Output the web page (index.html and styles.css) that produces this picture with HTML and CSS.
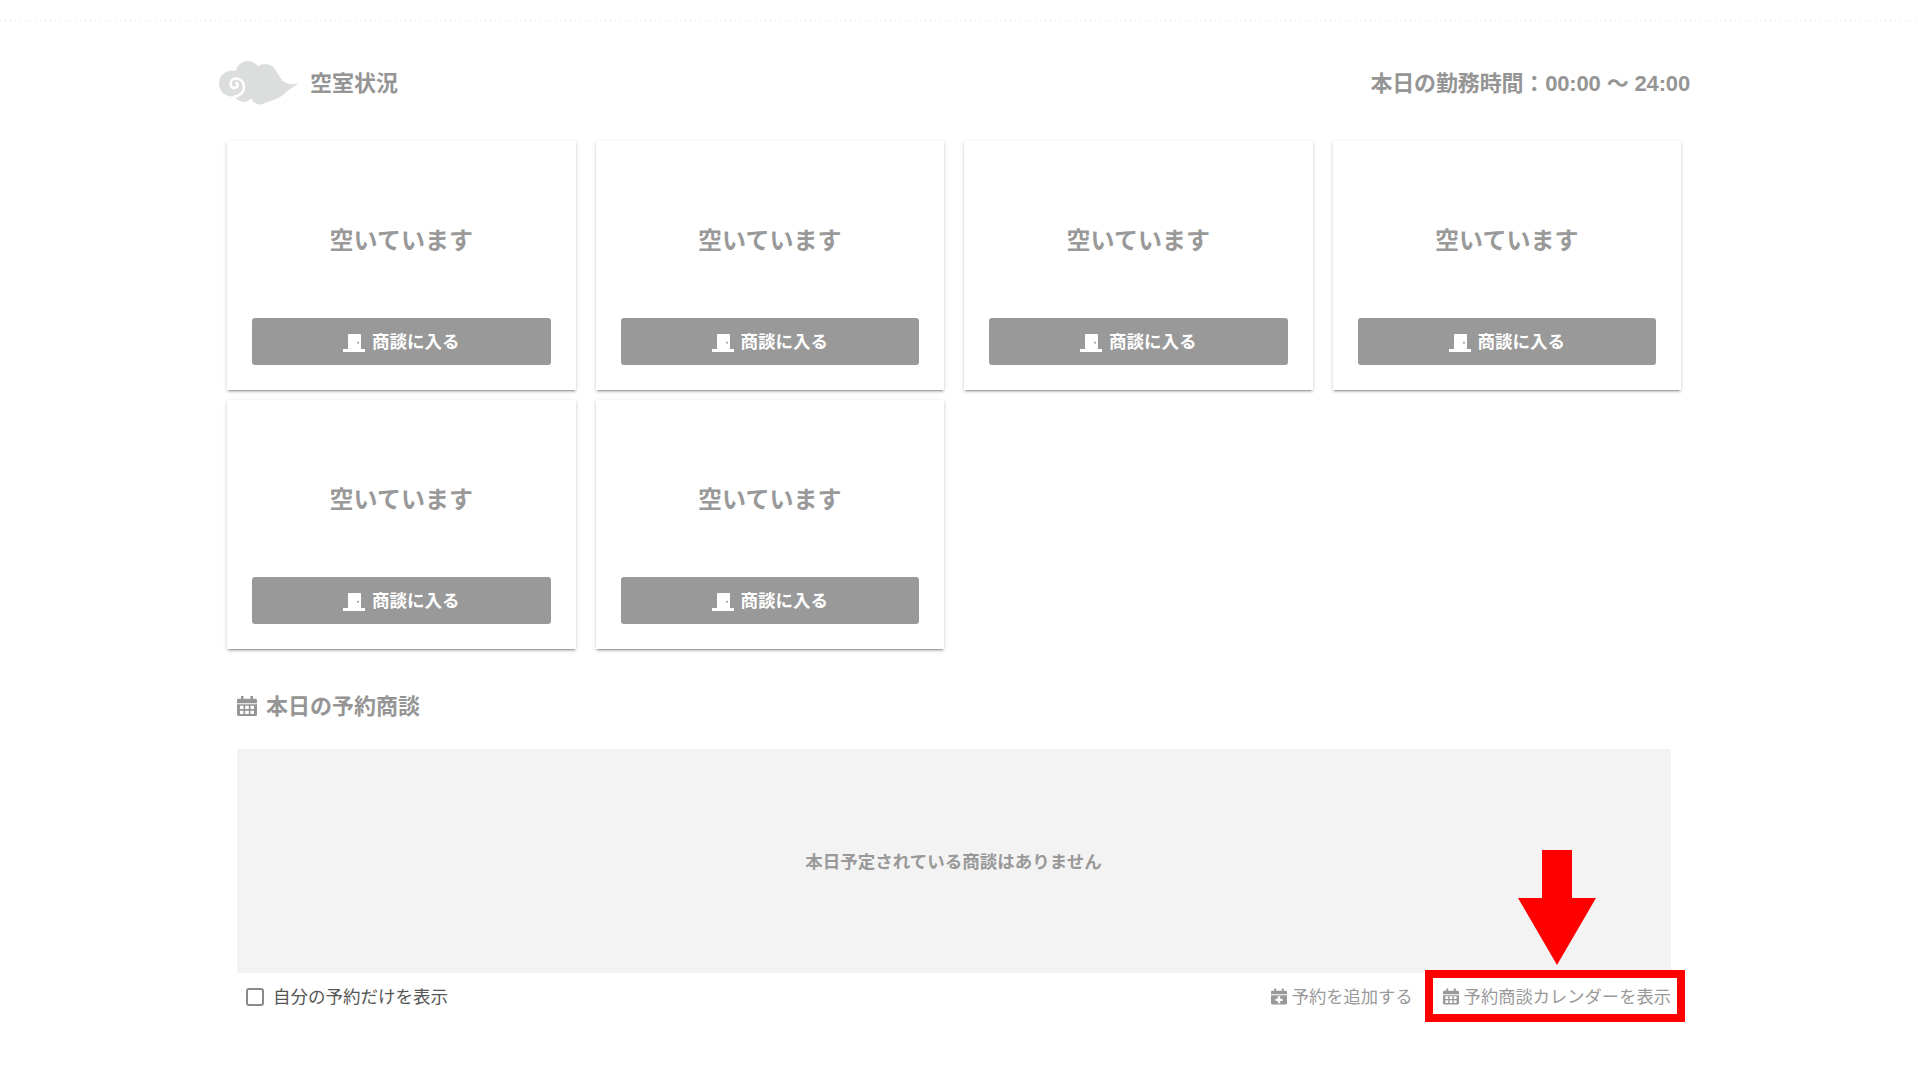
FILE: index.html
```html
<!DOCTYPE html>
<html lang="ja">
<head>
<meta charset="utf-8">
<title>空室状況</title>
<link rel="stylesheet" href="styles.css">
</head>
<body>
<svg class="defs" width="0" height="0" aria-hidden="true">
  <symbol id="cal" viewBox="0 0 20 20">
    <path fill-rule="evenodd" d="M4 0h2.500v2.800h7V0H16v2.800h2.500c.8 0 1.500.7 1.500 1.500v3H0v-3c0-.8.7-1.500 1.500-1.500H4zM0 8.300h20v10.200c0 .8-.7 1.500-1.500 1.500h-17C.7 20 0 19.300 0 18.500zM3 9.700V13h3.500V9.700zM8.200 9.700V13h3.600V9.700zM13.500 9.700V13H17V9.700zM3 14.700V18h3.500v-3.300zM8.200 14.700V18h3.600v-3.300zM13.500 14.700V18H17v-3.300z"/>
  </symbol>
  <symbol id="door" viewBox="0 0 22 18">
    <path fill-rule="evenodd" d="M6 0h11c.6 0 1 .4 1 1v14H5V1c0-.6.4-1 1-1zM14 8.800a1 1 0 1 0 2 0 1 1 0 0 0-2 0z"/>
    <rect x="0" y="15" width="22" height="3"/>
  </symbol>
</svg>

<div class="topline"></div>

<header class="status-head">
  <div class="status-title">
    <svg class="cloud" viewBox="0 0 80 44" aria-hidden="true">
      <g fill="#dcdedd">
        <circle cx="13" cy="22.500" r="13"/>
        <circle cx="29" cy="12.500" r="12.500"/>
        <circle cx="46" cy="15.500" r="12.500"/>
        <circle cx="24.500" cy="31" r="10"/>
        <circle cx="41" cy="33.500" r="10"/>
        <circle cx="28" cy="23" r="13"/>
        <path d="M52 6c6 3 8 10 12 14 4 3 9 3.500 15.500 2.800-4.500 2-8 5-11.800 8-3.500 3-7 6-10 7-5 2-10 4-15 4.200z"/>
      </g>
      <path d="M16 35.500c5-1 9-4.500 9-9.500 0-5-3.500-8.500-7.500-8.500-3.500 0-6 2.500-6 5.500 0 2.500 2 4.500 4.500 3.800 2.500-.5 3.500-3.300 1.500-5" fill="none" stroke="#fff" stroke-width="2.500" stroke-linecap="round"/>
    </svg>
    <h1>空室状況</h1>
  </div>
  <p class="hours">本日の勤務時間：00:00 〜 24:00</p>
</header>

<section class="rooms">
  <article class="room"><p>空いています</p><button class="enter"><svg class="door"><use href="#door"/></svg><span>商談に入る</span></button></article>
  <article class="room"><p>空いています</p><button class="enter"><svg class="door"><use href="#door"/></svg><span>商談に入る</span></button></article>
  <article class="room"><p>空いています</p><button class="enter"><svg class="door"><use href="#door"/></svg><span>商談に入る</span></button></article>
  <article class="room"><p>空いています</p><button class="enter"><svg class="door"><use href="#door"/></svg><span>商談に入る</span></button></article>
  <article class="room"><p>空いています</p><button class="enter"><svg class="door"><use href="#door"/></svg><span>商談に入る</span></button></article>
  <article class="room"><p>空いています</p><button class="enter"><svg class="door"><use href="#door"/></svg><span>商談に入る</span></button></article>
</section>

<section class="today">
  <h2><svg class="cal-lg"><use href="#cal"/></svg><span>本日の予約商談</span></h2>
  <div class="empty">本日予定されている商談はありません</div>
  <div class="today-foot">
    <label class="own"><span class="box"></span><span>自分の予約だけを表示</span></label>
    <div class="links">
      <a class="link">
        <svg class="cal-sm" viewBox="0 0 20 20" aria-hidden="true"><path fill-rule="evenodd" d="M4 0h2.500v2.800h7V0H16v2.800h2.500c.8 0 1.500.7 1.500 1.500v3H0v-3c0-.8.7-1.500 1.500-1.500H4zM0 8.300h20v10.200c0 .8-.7 1.500-1.500 1.500h-17C.7 20 0 19.300 0 18.500zM8.500 9.800v2.900H5.600v2.800h2.900v2.900h3v-2.900h2.900v-2.800h-2.900V9.800z"/></svg><span>予約を追加する</span>
      </a>
      <a class="link"><svg class="cal-sm"><use href="#cal"/></svg><span>予約商談カレンダーを表示</span></a>
    </div>
  </div>
  <div class="callout-box"></div>
  <svg class="callout-arrow" viewBox="0 0 78 115" aria-hidden="true"><path d="M24 0h30v48h24L39 115 0 48h24z" fill="#f00"/></svg>
</section>
</body>
</html>
```

FILE: styles.css
```css
* { box-sizing: border-box; }
html, body { margin: 0; padding: 0; }
body {
  width: 1920px;
  height: 1080px;
  overflow: hidden;
  background: #fff;
  color: #999;
  font-family: "Liberation Sans", "Noto Sans CJK JP", sans-serif;
}
.defs { position: absolute; }
.topline {
  height: 21px;
  background: repeating-linear-gradient(90deg, #e0e0e0 0 1px, transparent 1px 5px) left bottom / 100% 1px no-repeat;
}

.status-head {
  display: flex;
  justify-content: space-between;
  align-items: center;
  height: 44px;
  margin: 40px 230px 0 219px;
}
.status-title { display: flex; align-items: center; gap: 11px; }
.cloud { width: 80px; height: 44px; display: block; flex: none; }
.status-title h1 { margin: 0 0 5px; font-size: 22px; font-weight: 700; color: #959595; }
.hours { margin: 0 0 5px; font-size: 22px; font-weight: 700; color: #959595; letter-spacing: -0.15px; }

.rooms {
  display: grid;
  grid-template-columns: repeat(4, 348.500px);
  column-gap: 20px;
  row-gap: 10px;
  margin: 36px 0 0 227px;
}
.room {
  height: 249px;
  padding: 0 25px 25.500px;
  display: flex;
  flex-direction: column;
  background: #fff;
  box-shadow: 0 2px 2px rgba(0,0,0,.14), 0 3px 1px -2px rgba(0,0,0,.2), 0 1px 5px rgba(0,0,0,.12);
}
.room p {
  flex: 1;
  margin: 0;
  padding-top: 18px;
  display: flex;
  align-items: center;
  justify-content: center;
  font-size: 24px;
  font-weight: 700;
  color: #999;
}
.enter {
  height: 46.500px;
  display: flex;
  align-items: center;
  justify-content: center;
  gap: 7px;
  border: 0;
  border-radius: 3px;
  background: #999;
  color: #fff;
  font: 700 17.500px "Liberation Sans", "Noto Sans CJK JP", sans-serif;
}
.enter span { margin-bottom: 2px; }
.door { width: 22px; height: 18px; fill: #fff; margin-top: 3px; }

.today { margin: 43px 249px 0 237px; }
.today h2 {
  margin: 0;
  height: 30px;
  display: flex;
  align-items: center;
  gap: 9px;
  font-size: 22px;
  font-weight: 700;
  color: #959595;
}
.today h2 span { margin-bottom: 7px; }
.cal-lg { width: 20px; height: 20px; fill: #959595; flex: none; margin-bottom: 2px; }
.empty {
  height: 224px;
  margin-top: 27px;
  display: flex;
  align-items: center;
  justify-content: center;
  padding: 0 1px 2px 0;
  background: #f3f3f3;
  font-size: 17.500px;
  font-weight: 700;
  color: #999;
}
.today-foot {
  height: 48px;
  padding-left: 9px;
  display: flex;
  align-items: center;
  justify-content: space-between;
}
.own { display: flex; align-items: center; gap: 9px; font-size: 17.500px; font-weight: 400; color: #555; }
.own span:last-child { margin-bottom: 4px; }
.box {
  width: 18px;
  height: 18px;
  border: 2px solid #8a8a8a;
  border-radius: 3px;
}
.links { display: flex; gap: 30px; }
.link { display: flex; align-items: center; gap: 5px; font-size: 17.300px; color: #999; }
.link span { margin-bottom: 4px; }
.cal-sm { width: 16px; height: 17px; fill: #999; flex: none; margin-bottom: 2px; }

.callout-box {
  position: absolute;
  left: 1425px;
  top: 970px;
  width: 260px;
  height: 52px;
  border: 8px solid #f00;
}
.callout-arrow {
  position: absolute;
  left: 1518px;
  top: 850px;
  width: 78px;
  height: 115px;
}
```
